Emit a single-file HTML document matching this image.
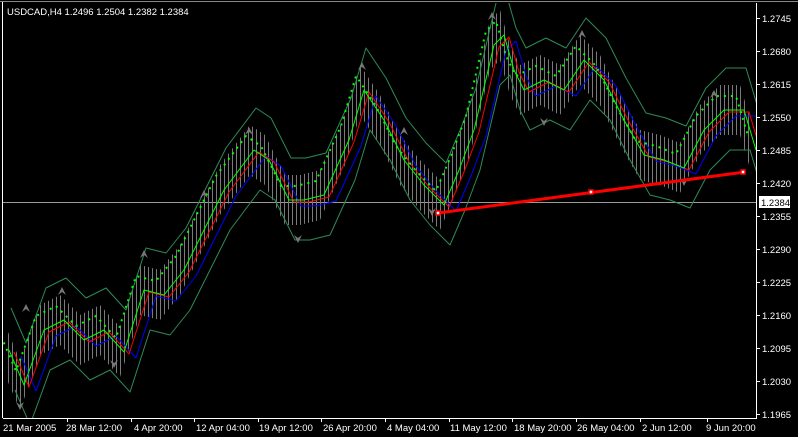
<!DOCTYPE html>
<html><head><style>
html,body{margin:0;padding:0;background:#000;width:798px;height:437px;overflow:hidden}
svg{display:block}
text{font-family:"Liberation Sans",sans-serif;font-size:9.5px;fill:#fff}
</style></head><body>
<svg width="798" height="437" viewBox="0 0 798 437">
<defs>
<pattern id="p" width="4" height="4" patternUnits="userSpaceOnUse"><rect width="1" height="4" fill="#7a7a7a"/></pattern>
<clipPath id="c"><rect x="3" y="3" width="753" height="415"/></clipPath>
</defs>
<rect x="0" y="0" width="798" height="437" fill="#000"/>
<line x1="0" y1="1.5" x2="798" y2="1.5" stroke="#888"/>
<line x1="2.5" y1="2" x2="2.5" y2="418" stroke="#fff"/>
<g clip-path="url(#c)">
<line x1="3" y1="202.5" x2="756" y2="202.5" stroke="#999"/>
<polygon fill="url(#p)" points="5,325 20,360 40,305 60,295 80,315 100,305 120,327 140,265 160,270 180,245 200,205 220,165 250,125 265,135 285,175 300,175 320,170 345,115 360,65 380,95 400,135 420,160 440,180 455,145 470,105 490,20 500,10 510,45 520,65 540,55 560,65 580,35 600,55 620,95 640,130 660,135 680,143 700,105 720,85 740,85 752,125 752,175 740,135 720,135 700,155 680,193 660,185 640,180 620,145 600,105 580,85 560,115 540,105 520,115 510,95 500,60 490,70 470,155 455,195 440,230 420,210 400,185 380,145 360,115 345,165 320,220 300,225 285,225 265,185 250,175 220,215 200,255 180,295 160,320 140,315 120,377 100,355 80,365 60,345 40,355 20,410 5,375"/>
<g fill="none" stroke-width="1" stroke-linejoin="round">
<polyline stroke="#2e8b57" transform="translate(6,-42)" points="5,350 20,385 40,330 60,320 80,340 100,330 120,352 140,290 160,295 180,270 200,230 220,190 250,150 265,160 285,200 300,200 320,195 345,140 360,90 380,120 400,160 420,185 440,205 455,170 470,130 490,45 500,35 510,70 520,90 540,80 560,90 580,60 600,80 620,120 640,155 660,160 680,168 700,130 720,110 740,110 752,150"/>
<polyline stroke="#2e8b57" transform="translate(10,40)" points="5,350 20,385 40,330 60,320 80,340 100,330 120,352 140,290 160,295 180,270 200,230 220,190 250,150 265,160 285,200 300,200 320,195 345,140 360,90 380,120 400,160 420,185 440,205 455,170 470,130 490,45 500,35 510,70 520,90 540,80 560,90 580,60 600,80 620,120 640,155 660,160 680,168 700,130 720,110 740,110 752,150"/>
<polyline stroke="#0000ff" transform="translate(16,6)" points="5,350 20,385 40,330 60,320 80,340 100,330 120,352 140,290 160,295 180,270 200,230 220,190 250,150 265,160 285,200 300,200 320,195 345,140 360,90 380,120 400,160 420,185 440,205 455,170 470,130 490,45 500,35 510,70 520,90 540,80 560,90 580,60 600,80 620,120 640,155 660,160 680,168 700,130 720,110 740,110 752,150"/>
<polyline stroke="#ff0000" transform="translate(9,2)" points="5,350 20,385 40,330 60,320 80,340 100,330 120,352 140,290 160,295 180,270 200,230 220,190 250,150 265,160 285,200 300,200 320,195 345,140 360,90 380,120 400,160 420,185 440,205 455,170 470,130 490,45 500,35 510,70 520,90 540,80 560,90 580,60 600,80 620,120 640,155 660,160 680,168 700,130 720,110 740,110 752,150"/>
<polyline stroke="#00ff00" transform="translate(4,0)" points="5,350 20,385 40,330 60,320 80,340 100,330 120,352 140,290 160,295 180,270 200,230 220,190 250,150 265,160 285,200 300,200 320,195 345,140 360,90 380,120 400,160 420,185 440,205 455,170 470,130 490,45 500,35 510,70 520,90 540,80 560,90 580,60 600,80 620,120 640,155 660,160 680,168 700,130 720,110 740,110 752,150"/>
<polyline stroke="#00ff00" stroke-width="2" stroke-dasharray="2 5" transform="translate(-4,-14)" points="5,350 20,385 40,330 60,320 80,340 100,330 120,352 140,290 160,295 180,270 200,230 220,190 250,150 265,160 285,200 300,200 320,195 345,140 360,90 380,120 400,160 420,185 440,205 455,170 470,130 490,45 500,35 510,70 520,90 540,80 560,90 580,60 600,80 620,120 640,155 660,160 680,168 700,130 720,110 740,110 752,150"/>
</g>
<g fill="#777">
<path d="M22,312 l4,-8 l4,8 l-4,-3z"/><path d="M58,295 l4,-8 l4,8 l-4,-3z"/><path d="M140,258 l4,-8 l4,8 l-4,-3z"/><path d="M200,198 l4,-8 l4,8 l-4,-3z"/><path d="M245,135 l4,-8 l4,8 l-4,-3z"/><path d="M358,70 l4,-8 l4,8 l-4,-3z"/><path d="M400,135 l4,-8 l4,8 l-4,-3z"/><path d="M488,20 l4,-8 l4,8 l-4,-3z"/><path d="M578,38 l4,-8 l4,8 l-4,-3z"/><path d="M710,98 l4,-8 l4,8 l-4,-3z"/>
<path d="M16,402 l4,8 l4,-8 l-4,3z"/><path d="M110,360 l4,8 l4,-8 l-4,3z"/><path d="M294,235 l4,8 l4,-8 l-4,3z"/><path d="M428,208 l4,8 l4,-8 l-4,3z"/><path d="M540,118 l4,8 l4,-8 l-4,3z"/><path d="M680,178 l4,8 l4,-8 l-4,3z"/>
</g>
<line x1="438" y1="213" x2="745" y2="172" stroke="#ff0000" stroke-width="3"/>
<g fill="#fff" stroke="#f00" stroke-width="1.5"><rect x="436" y="211" width="4" height="4"/><rect x="589" y="190" width="4" height="4"/><rect x="741" y="170" width="4" height="4"/></g>
</g>
<line x1="756.5" y1="3" x2="756.5" y2="419" stroke="#fff"/>
<line x1="3" y1="418.5" x2="757" y2="418.5" stroke="#fff"/>
<text x="7" y="15">USDCAD,H4  1.2496 1.2504 1.2382 1.2384</text>
<g stroke="#fff">
<line x1="756" y1="18.5" x2="760" y2="18.5"/><line x1="756" y1="51.5" x2="760" y2="51.5"/><line x1="756" y1="84.5" x2="760" y2="84.5"/><line x1="756" y1="117.5" x2="760" y2="117.5"/><line x1="756" y1="150.5" x2="760" y2="150.5"/><line x1="756" y1="183.5" x2="760" y2="183.5"/><line x1="756" y1="216.5" x2="760" y2="216.5"/><line x1="756" y1="249.5" x2="760" y2="249.5"/><line x1="756" y1="282.5" x2="760" y2="282.5"/><line x1="756" y1="315.5" x2="760" y2="315.5"/><line x1="756" y1="348.5" x2="760" y2="348.5"/><line x1="756" y1="381.5" x2="760" y2="381.5"/><line x1="756" y1="414.5" x2="760" y2="414.5"/>
</g>
<g>
<text x="762" y="22">1.2745</text><text x="762" y="55">1.2680</text><text x="762" y="88">1.2615</text><text x="762" y="121">1.2550</text><text x="762" y="154">1.2485</text><text x="762" y="187">1.2420</text><text x="762" y="220">1.2355</text><text x="762" y="253">1.2290</text><text x="762" y="286">1.2225</text><text x="762" y="319">1.2160</text><text x="762" y="352">1.2095</text><text x="762" y="385">1.2030</text><text x="762" y="418">1.1965</text>
</g>
<rect x="759" y="196" width="31" height="12" fill="#fff"/>
<text x="761" y="206" style="fill:#000">1.2384</text>
<g stroke="#fff">
<line x1="67.5" y1="418" x2="67.5" y2="422"/><line x1="131.5" y1="418" x2="131.5" y2="422"/><line x1="194.5" y1="418" x2="194.5" y2="422"/><line x1="258.5" y1="418" x2="258.5" y2="422"/><line x1="321.5" y1="418" x2="321.5" y2="422"/><line x1="385.5" y1="418" x2="385.5" y2="422"/><line x1="449.5" y1="418" x2="449.5" y2="422"/><line x1="512.5" y1="418" x2="512.5" y2="422"/><line x1="576.5" y1="418" x2="576.5" y2="422"/><line x1="640.5" y1="418" x2="640.5" y2="422"/><line x1="707.5" y1="418" x2="707.5" y2="422"/>
</g>
<g>
<text x="3" y="431">21 Mar 2005</text><text x="66" y="431">28 Mar 12:00</text><text x="134" y="431">4 Apr 20:00</text><text x="196" y="431">12 Apr 04:00</text><text x="259" y="431">19 Apr 12:00</text><text x="323" y="431">26 Apr 20:00</text><text x="387" y="431">4 May 04:00</text><text x="450" y="431">11 May 12:00</text><text x="514" y="431">18 May 20:00</text><text x="577" y="431">26 May 04:00</text><text x="642" y="431">2 Jun 12:00</text><text x="706" y="431">9 Jun 20:00</text>
</g>
</svg>
</body></html>
